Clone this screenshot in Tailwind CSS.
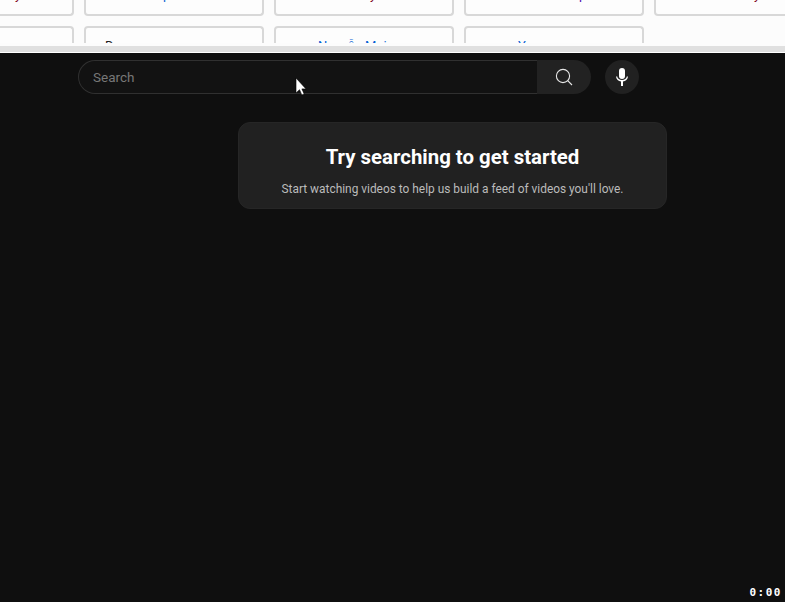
<!DOCTYPE html>
<html lang="en">
<head>
    <meta charset="UTF-8">
    <title>Search</title>
    <script src="https://cdn.jsdelivr.net/npm/@tailwindcss/browser@4"></script>
</head>
<body class="relative h-[602px] w-[785px] overflow-hidden bg-[#0f0f0f] font-['Roboto',sans-serif]">

    <!-- page behind the player -->
    <div class="h-[46px] bg-[#fcfcfc] text-[13px] leading-4">
        <div class="h-[43px] overflow-hidden">
            <div class="-mt-[44px] flex gap-[10px] -ml-[106px]">
                <div class="relative h-[60px] w-[180px] shrink-0 rounded-[4px] border-2 border-t-0 border-[#d8d8d8] bg-[#fdfdfd]"><span class="absolute bottom-[11px] left-[119px] text-[#800020]">y</span></div>
                <div class="relative h-[60px] w-[180px] shrink-0 rounded-[4px] border-2 border-t-0 border-[#d8d8d8] bg-[#fdfdfd]"><span class="absolute bottom-[11px] left-[77px] text-[#065fd4]">p</span></div>
                <div class="relative h-[60px] w-[180px] shrink-0 rounded-[4px] border-2 border-t-0 border-[#d8d8d8] bg-[#fdfdfd]"><span class="absolute bottom-[11px] left-[94px] text-[#800020]">y</span></div>
                <div class="relative h-[60px] w-[180px] shrink-0 rounded-[4px] border-2 border-t-0 border-[#d8d8d8] bg-[#fdfdfd]"><span class="absolute bottom-[11px] left-[113px] text-[#4b0fb0]">p</span></div>
                <div class="relative h-[60px] w-[180px] shrink-0 rounded-[4px] border-2 border-t-0 border-[#d8d8d8] bg-[#fdfdfd]"><span class="absolute bottom-[11px] left-[98px] text-[#800020]">y</span></div>
            </div>
            <div class="mt-[10px] flex gap-[10px] -ml-[106px]">
                <div class="h-[60px] w-[180px] shrink-0 rounded-[4px] border-2 border-b-0 border-[#d8d8d8] bg-[#fdfdfd]"></div>
                <div class="h-[60px] w-[180px] shrink-0 rounded-[4px] border-2 border-b-0 border-[#d8d8d8] bg-[#fdfdfd] pl-[19px] pt-[10px] text-[#222]">D</div>
                <div class="h-[60px] w-[180px] shrink-0 rounded-[4px] border-2 border-b-0 border-[#d8d8d8] bg-[#fdfdfd] pl-[42px] pt-[10px] text-[#065fd4]">Nguyễn Mai</div>
                <div class="h-[60px] w-[180px] shrink-0 rounded-[4px] border-2 border-b-0 border-[#d8d8d8] bg-[#fdfdfd] pl-[52px] pt-[10px] text-[#065fd4]">Y</div>
            </div>
        </div>
    </div>
    <div class="h-[6px] bg-[#e0e0e0]"></div>
    <div class="h-px bg-white"></div>

    <!-- search bar -->
    <div class="mt-[7px] flex h-[34px] items-center pl-[78px]">
        <div class="flex h-full w-[459px] items-center rounded-l-full border border-r-0 border-[#303030] bg-[#121212] pl-[14px] text-[13.500px] text-[#777]">Search</div>
        <button class="flex h-full w-[54px] items-center justify-center rounded-r-full bg-[#222]">
            <svg width="18" height="18" viewBox="0 0 18 18" fill="none" stroke="#e8e8e8" stroke-width="1.1"><circle cx="8" cy="8" r="6.6"/><path d="M12.7 12.7 17 17"/></svg>
        </button>
        <button class="ml-[14px] flex h-[34px] w-[34px] items-center justify-center rounded-full bg-[#212121]">
            <svg width="14" height="18" viewBox="0 0 14 18" fill="#fff"><rect x="4" y="0" width="6" height="11" rx="3"/><path d="M1 8.500h1.200c.3 2.200 2.300 3.600 4.800 3.600s4.500-1.400 4.800-3.600H13c-.3 2.800-2.400 4.600-5 4.900V18H6v-4.600C3.400 13.100 1.300 11.300 1 8.500z"/></svg>
        </button>
    </div>

    <!-- prompt card -->
    <div class="ml-[238px] mt-[28px] flex h-[87px] w-[429px] flex-col items-center rounded-[12px] border border-[#262626] bg-[#212121] pt-[20px]">
        <h2 class="text-[20.400px] leading-7 font-bold text-white">Try searching to get started</h2>
        <p class="mt-[9px] text-[11.900px] leading-[18px] text-[#bbb]">Start watching videos to help us build a feed of videos you'll love.</p>
    </div>

    <!-- mouse cursor -->
    <svg class="absolute left-[295px] top-[78px]" width="13" height="19" viewBox="0 0 13 19"><path d="M1 0v15l3.500-3.300 2.300 5.300 2.400-1-2.300-5.100H11z" fill="#fff" stroke="#000" stroke-width=".6"/></svg>

    <!-- timestamp -->
    <div class="absolute bottom-[3px] right-[3px] font-['DejaVu_Sans_Mono',monospace] text-[11px] leading-3 font-bold tracking-[1.500px] text-white">0:00</div>
</body>
</html>
